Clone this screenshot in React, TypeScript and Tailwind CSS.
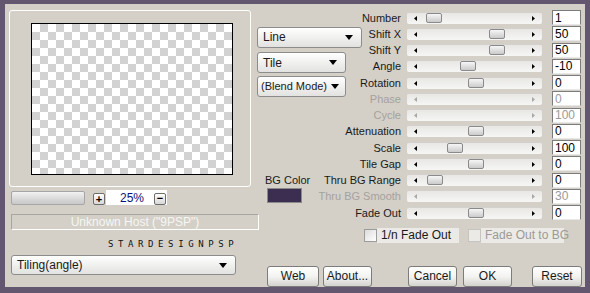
const font = { fontFamily: '"Liberation Sans", Arial, sans-serif' };

type Row = {
  label: string;
  value: string;
  thumb?: number;
  disabled?: boolean;
};

const rows: Row[] = [
  { label: "Number", value: "1", thumb: 19 },
  { label: "Shift X", value: "50", thumb: 82 },
  { label: "Shift Y", value: "50", thumb: 82 },
  { label: "Angle", value: "-10", thumb: 53 },
  { label: "Rotation", value: "0", thumb: 61 },
  { label: "Phase", value: "0", disabled: true },
  { label: "Cycle", value: "100", disabled: true },
  { label: "Attenuation", value: "0", thumb: 61 },
  { label: "Scale", value: "100", thumb: 40 },
  { label: "Tile Gap", value: "0", thumb: 61 },
  { label: "Thru BG Range", value: "0", thumb: 20 },
  { label: "Thru BG Smooth", value: "30", disabled: true },
  { label: "Fade Out", value: "0", thumb: 61 },
];

const rowStart = [
  "row-start-1",
  "row-start-2",
  "row-start-3",
  "row-start-4",
  "row-start-5",
  "row-start-6",
  "row-start-7",
  "row-start-8",
  "row-start-9",
  "row-start-10",
  "row-start-11",
  "row-start-12",
  "row-start-13",
];

function ArrowDown() {
  return (
    <svg width="8" height="5" viewBox="0 0 8 5" className="shrink-0">
      <path d="M0 0h8L4 5z" fill="#000" />
    </svg>
  );
}

function Dropdown({ label, className }: { label: string; className: string }) {
  return (
    <div
      className={`flex items-center justify-between whitespace-nowrap rounded-[3px] border border-[#8c8c8c] bg-gradient-to-b from-white to-[#e2e2e0] pl-[5px] pr-[8px] text-[12px] text-[#1a1a1a] ${className}`}
    >
      <span>{label}</span>
      <ArrowDown />
    </div>
  );
}

function Button({ label, className }: { label: string; className: string }) {
  return (
    <div
      className={`flex h-[21px] items-center justify-center rounded-[3px] border border-[#7c7c7c] bg-gradient-to-b from-white via-[#f3f3f1] to-[#d4d3ce] text-[12px] text-[#1a1a1a] ${className}`}
    >
      {label}
    </div>
  );
}

function Slider({ thumb, disabled }: { thumb?: number; disabled?: boolean }) {
  const c = disabled ? "#a8a8a8" : "#000";
  return (
    <div className="flex h-[12px] w-[135px] items-center rounded-[2px] border-t border-[#d2d1cd] bg-gradient-to-b from-[#e8e7e4] to-[#f6f6f5] px-[7px]">
      <svg width="3" height="5" viewBox="0 0 3 5" className="shrink-0">
        <path d="M3 0v5L0 2.5z" fill={c} />
      </svg>
      <div className="relative h-full flex-1">
        {thumb !== undefined && (
          <div
            className="absolute top-[0px] h-[10px] w-[16px] rounded-[2px] border border-[#8a8a8a] bg-gradient-to-b from-[#f6f6f6] to-[#cbcbcb]"
            style={{ left: thumb - 10 }}
          />
        )}
      </div>
      <svg width="3" height="5" viewBox="0 0 3 5" className="shrink-0">
        <path d="M0 0v5L3 2.5z" fill={c} />
      </svg>
    </div>
  );
}

export default function App() {
  return (
    <div
      className="h-[293px] w-[590px] bg-[#635770] pl-[5px] pt-[4px]"
      style={font}
    >
      <div className="flex h-[283px] w-[580px] overflow-hidden bg-[#d4d0c8]">
        {/* left column */}
        <div className="flex w-[252px] shrink-0 flex-col items-start">
          <div className="ml-[4px] mt-[6px] h-[177px] w-[242px] rounded-[3px] border border-white pl-[21px] pt-[12px]">
            <div className="h-[152px] w-[202px] border border-black bg-[conic-gradient(#d2d2d2_25%,#ffffff_0_50%,#d2d2d2_0_75%,#ffffff_0)] bg-[length:16px_16px]" />
          </div>
          <div className="ml-[6px] mt-[3px] flex h-[15px] items-center">
            <div className="h-[14px] w-[74px] rounded-[2px] border border-[#a6a6a6] bg-gradient-to-b from-[#f2f2f2] via-[#dcdcdc] to-[#c8c8c8]" />
            <div className="ml-[8px] mt-[3px] flex h-[12px] w-[12px] items-center justify-center rounded-[2px] border border-[#6e6e6e] bg-gradient-to-b from-white to-[#d8d8d8] text-[11px] font-bold leading-none text-black">
              +
            </div>
            <div className="ml-[1px] flex h-[15px] w-[61px] items-center bg-white">
              <span className="ml-[14px] text-[12px] text-[#10107a]">25%</span>
              <div className="ml-auto mr-[1px] mt-[2px] flex h-[12px] w-[12px] items-center justify-center rounded-[2px] border border-[#6e6e6e] bg-gradient-to-b from-white to-[#d8d8d8] text-[11px] font-bold leading-none text-black">
                −
              </div>
            </div>
          </div>
          <div className="ml-[6px] mt-[9px] flex h-[16px] w-[248px] items-center justify-center border border-[#a8a6a0] border-b-white border-r-white text-[12px] text-[#f6f6f4]">
            Unknown Host ("9PSP")
          </div>
          <div
            className="ml-[103px] mt-[9px] h-[10px] text-[9px] leading-[10px] tracking-[4.6px] text-[#111]"
            style={{ fontFamily: '"DejaVu Sans Mono", monospace' }}
          >
            STARDESIGNPSP
          </div>
          <Dropdown label="Tiling(angle)" className="ml-[6px] mt-[6px] h-[20px] w-[225px]" />
        </div>

        {/* right area */}
        <div className="flex w-[328px] flex-col">
          <div className="mt-[5.5px] grid grid-cols-[145px_135px_34px] grid-rows-[repeat(13,16.25px)] gap-x-[5px]">
            <Dropdown label="Line" className="col-start-1 row-start-2 mt-[1px] h-[21px] w-[105px] self-start justify-self-start" />
            <Dropdown label="Tile" className="col-start-1 row-start-3 mt-[10px] h-[21px] w-[89px] self-start justify-self-start" />
            <Dropdown label="(Blend Mode)" className="col-start-1 row-start-5 mt-[1.5px] h-[21px] w-[89px] self-start justify-self-start !pl-[3px] !pr-[6px] !text-[11px]" />
            <div className="col-start-1 row-start-11 ml-[8px] self-center justify-self-start whitespace-nowrap text-[11px] text-[#1a1a1a]">
              BG Color
            </div>
            <div className="col-start-1 row-start-12 ml-[10px] mt-[0px] h-[15px] w-[35px] self-start justify-self-start border border-[#8a8a8a] bg-[#3c2e50]" />
            {rows.map((r, i) => (
              <div key={r.label} className="contents">
                <div
                  className={`col-start-1 ${rowStart[i]} mr-[1px] self-center justify-self-end whitespace-nowrap text-[11px] leading-[14px] ${
                    r.disabled ? "text-[#a4a29d]" : "text-[#1a1a1a]"
                  }`}
                >
                  {r.label}
                </div>
                <div className={`col-start-2 ${rowStart[i]} self-center`}>
                  <Slider thumb={r.thumb} disabled={r.disabled} />
                </div>
                <div
                  className={`col-start-3 ${rowStart[i]} ml-[5px] flex h-[15px] w-[29px] items-center self-center border border-[#7c7c7c] border-b-[#e8e8e8] bg-white pl-[2px] text-[12px] ${
                    r.disabled ? "text-[#9a9a9a]" : "text-black"
                  }`}
                >
                  {r.value}
                </div>
              </div>
            ))}
          </div>

          <div className="ml-[107px] mt-[7px] flex h-[15px] items-center whitespace-nowrap text-[12px]">
            <div className="h-[13px] w-[13px] border border-[#9c9c9c] bg-gradient-to-br from-[#dcdcdc] to-white" />
            <div className="flex h-[15px] w-[82px] items-center bg-[#ebeae6] pl-[4px] text-[#1a1a1a]">
              1/n Fade Out
            </div>
            <div className="ml-[9px] h-[13px] w-[13px] border border-[#c4c4c0] bg-[#ebeae6]" />
            <div className="flex h-[15px] w-[83px] items-center bg-[#ebeae6] pl-[4px] text-[#9c9a95]">
              Fade Out to BG
            </div>
          </div>

          <div className="mt-[23px] flex">
            <Button label="Web" className="ml-[10px] w-[52px]" />
            <Button label="About..." className="ml-[4px] w-[49px]" />
            <Button label="Cancel" className="ml-[36px] w-[49px]" />
            <Button label="OK" className="ml-[6px] w-[49px]" />
            <Button label="Reset" className="ml-[20px] w-[50px]" />
          </div>
        </div>
      </div>
    </div>
  );
}
